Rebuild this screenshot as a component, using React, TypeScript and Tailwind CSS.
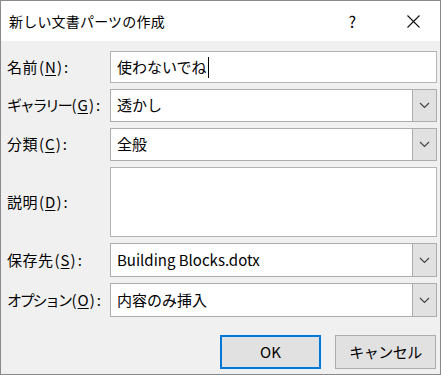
import React from "react";

const Chevron = () => (
  <svg width="11" height="7" viewBox="0 0 11 7" fill="none">
    <path d="M1 1 L5.5 5.5 L10 1" stroke="#444" strokeWidth="1.2" />
  </svg>
);

const Label = ({ text, k, kana }: { text: string; k: string; kana?: boolean }) => (
  <div className="flex items-center text-[15px] text-black">
    <span className={kana ? "tracking-[-2.3px]" : "tracking-[0.5px]"}>{text}</span>
    <span className="ml-[1px] mr-[1px]">(</span>
    <span className="underline underline-offset-2">{k}</span>
    <span className="ml-[1px]">)</span>
    <span className="ml-[2px]">:</span>
  </div>
);

const Combo = ({ value, h }: { value: string; h: string }) => (
  <div className={`flex ${h} border border-[#adadad] bg-white`}>
    <div className="flex flex-1 items-center pl-[6px] text-[15px] text-black">{value}</div>
    <div className="flex w-[24px] items-center justify-center border-l border-[#adadad] bg-[#e1e1e1]">
      <Chevron />
    </div>
  </div>
);

export default function App() {
  return (
    <div
      className="flex h-[375px] w-[441px] flex-col border border-[#8a8a8a] bg-[#f0f0f0]"
      style={{ fontFamily: '"Noto Sans CJK JP", "Noto Sans", sans-serif' }}
    >
      <div className="flex h-[40px] items-center bg-white pl-[8px] text-[14px] text-black">
        <span className="flex-1 pt-[1px] tracking-[0.2px]">新しい文書パーツの作成</span>
        <span className="mr-[51px] text-[16px]">?</span>
        <svg className="mr-[20px]" width="13" height="13" viewBox="0 0 13 13">
          <path d="M0.5 0.5 L12.5 12.5 M12.5 0.5 L0.5 12.5" stroke="#111" strokeWidth="1.1" />
        </svg>
      </div>
      <div className="grid grid-cols-[103px_1fr] gap-y-[6px] pl-[6px] pr-[3px] pt-[10px]">
        <Label text="名前" k="N" />
        <div className="flex h-[32px] items-center border border-[#b4b4b4] bg-white pl-[6px] text-[15px] text-black">
          使わないでね<span className="ml-[1px] inline-block h-[21px] w-[1px] bg-black" />
        </div>
        <Label text="ギャラリー" k="G" kana />
        <Combo value="透かし" h="h-[33px]" />
        <Label text="分類" k="C" />
        <Combo value="全般" h="h-[33px]" />
        <Label text="説明" k="D" />
        <div className="h-[70px] border border-[#b4b4b4] bg-white" />
        <Label text="保存先" k="S" />
        <Combo value="Building Blocks.dotx" h="h-[34px]" />
        <Label text="オプション" k="O" kana />
        <Combo value="内容のみ挿入" h="h-[34px]" />
      </div>
      <div className="mt-[18px] flex justify-end gap-[14px] pr-[4px]">
        <button className="flex h-[34px] w-[101px] items-center justify-center border-2 border-[#0078d7] bg-[#e1e1e1] text-[15px] text-black">
          OK
        </button>
        <button className="flex h-[34px] w-[101px] items-center justify-center border border-[#adadad] bg-[#e1e1e1] text-[15px] tracking-[-0.5px] text-black">
          キャンセル
        </button>
      </div>
    </div>
  );
}
